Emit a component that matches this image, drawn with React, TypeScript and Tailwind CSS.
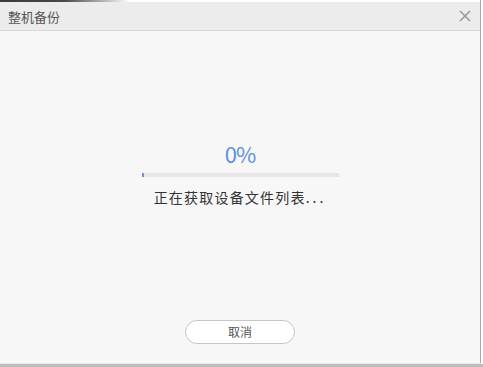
import React from "react";

export default function App() {
  return (
    <div
      className="w-[483px] h-[367px] bg-white relative overflow-hidden"
      style={{ fontFamily: '"Noto Sans CJK SC", "Noto Sans", sans-serif' }}
    >
      <div className="absolute left-0 top-0 h-[2px] w-[130px] bg-gradient-to-r from-[#3a3a3a] via-[#4a4a4a] to-transparent" />
      <div className="flex flex-col w-[481px] h-[363px] border-r border-[#a9a9a9]">
        <div className="h-[29px] mt-[2px] bg-[#ececec] border-b border-[#d6d6d6] flex items-center justify-between pl-[8px] pr-[9px]">
          <span className="text-[13px] text-[#555555] leading-none">整机备份</span>
          <svg width="12" height="12" viewBox="0 0 12 12">
            <path d="M1 1L11 11M11 1L1 11" stroke="#9a9a9a" strokeWidth="1.6" />
          </svg>
        </div>
        <div className="flex-1 bg-[#f7f7f7] flex flex-col items-center">
          <div className="mt-[111px] text-[22px] leading-none text-[#5d8fdc] tracking-[-1px]">0%</div>
          <div className="mt-[9px] w-[197px] h-[4px] bg-[#e6e6e6] flex">
            <div className="w-[2px] h-full bg-[#6f8fd8]" />
          </div>
          <div className="mt-[13px] text-[14px] leading-none text-[#333333] tracking-[1.2px]">
            正在获取设备文件列表<span className="tracking-[3px]">...</span>
          </div>
          <button className="mt-[116px] w-[110px] h-[24px] rounded-full border border-[#c6c6c6] bg-white text-[12px] text-[#555555] leading-none">
            取消
          </button>
        </div>
      </div>
      <div className="h-[1px] w-[481px] bg-[#ececec]" />
      <div className="h-[3px] w-full bg-[#bdbdbd]" />
    </div>
  );
}
